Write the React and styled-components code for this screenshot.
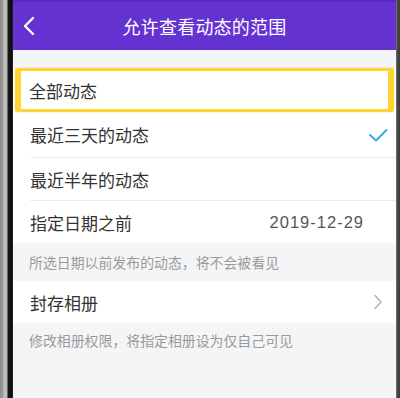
import React from "react";
import styled, { createGlobalStyle } from "styled-components";

const GlobalStyle = createGlobalStyle`
  html, body {
    margin: 0;
    padding: 0;
    background: #f4f5f7;
  }
  body {
    font-family: "Noto Sans CJK SC", "Noto Sans", sans-serif;
  }
`;

const Frame = styled.div`
  display: flex;
  width: 400px;
  height: 398px;
  overflow: hidden;
`;

const LeftBezel = styled.div`
  width: 13px;
  flex-shrink: 0;
  background: linear-gradient(
    to right,
    #8e8e8e 0px,
    #9c9c9c 3px,
    #c4c4c4 4px,
    #b8b8b8 7px,
    #1a1a1a 8px,
    #0a0a0a 12px,
    #3a3a3a 13px
  );
`;

const RightBezel = styled.div`
  width: 4px;
  flex-shrink: 0;
  background: linear-gradient(to right, #8a8a8a 0px, #4a4a4a 1px, #3c3c3c 4px);
`;

const Screen = styled.div`
  flex: 1;
  display: flex;
  flex-direction: column;
  background: #f4f5f7;
`;

const Header = styled.div`
  height: 50px;
  flex-shrink: 0;
  display: flex;
  align-items: center;
  justify-content: center;
  position: relative;
  background: #6532d2;
  border-top: 2px solid #5a2cbc;
  box-sizing: border-box;
`;

const Back = styled.div`
  position: absolute;
  left: 9px;
  top: 50%;
  transform: translateY(-50%);
  display: flex;
`;

const Title = styled.div`
  color: #ffffff;
  font-size: 18px;
  letter-spacing: 0.2px;
`;

const Spacer = styled.div`
  height: 18px;
`;

const Group = styled.div`
  background: #ffffff;
`;

const Highlight = styled.div`
  margin: 0 2px 0 2px;
  border: 3px solid #fcd434;
  border-left-width: 6px;
  border-right-width: 6px;
  border-radius: 2px;
  box-shadow: 0 0 2px rgba(252, 212, 52, 0.6);
`;

const Row = styled.div`
  height: ${(p) => p.$h ?? 44}px;
  display: flex;
  align-items: center;
  justify-content: space-between;
  padding-left: ${(p) => p.$pl ?? 17}px;
  padding-right: ${(p) => p.$pr ?? 10}px;
  box-sizing: border-box;
  border-bottom: ${(p) => (p.$line ? "1px solid #ebebeb" : "none")};
  margin-left: ${(p) => p.$ml ?? 0}px;
`;

const Label = styled.span`
  color: #333333;
  font-size: 17px;
`;

const Value = styled.span`
  color: #555555;
  font-size: 16.5px;
  letter-spacing: 1px;
  font-family: "Liberation Sans", "Noto Sans", sans-serif;
  margin-right: 22px;
`;

const Note = styled.div`
  color: #9a9a9a;
  font-size: 13.9px;
  padding: 0 0 0 16px;
  height: ${(p) => p.$h}px;
  display: flex;
  align-items: center;
`;

const Check = () => (
  <svg width="20" height="14" viewBox="0 0 20 14">
    <path d="M2 7 L8 12.5 L18.5 2" fill="none" stroke="#3ba9e3" strokeWidth="2" strokeLinecap="round" strokeLinejoin="round" />
  </svg>
);

const Chevron = () => (
  <svg width="10" height="16" viewBox="0 0 10 16">
    <path d="M2 1.5 L8 8 L2 14.5" fill="none" stroke="#b7b7b7" strokeWidth="1.6" strokeLinecap="round" strokeLinejoin="round" />
  </svg>
);

const BackIcon = () => (
  <svg width="14" height="20" viewBox="0 0 14 20">
    <path d="M11 2 L3 10 L11 18" fill="none" stroke="#ffffff" strokeWidth="2.4" strokeLinecap="round" strokeLinejoin="round" />
  </svg>
);

const App = () => {
  return (
    <>
      <GlobalStyle />
      <Frame>
        <LeftBezel />
        <Screen>
          <Header>
            <Back>
              <BackIcon />
            </Back>
            <Title>允许查看动态的范围</Title>
          </Header>
          <Spacer />
          <Group>
            <Highlight>
              <Row $h={38} $pl={8}>
                <Label>全部动态</Label>
              </Row>
            </Highlight>
            <Row $h={46} $line $ml={17} $pl={0} $pr={8}>
              <Label>最近三天的动态</Label>
              <Check />
            </Row>
            <Row $h={43} $line $ml={17} $pl={0}>
              <Label>最近半年的动态</Label>
            </Row>
            <Row $h={42} $pl={17}>
              <Label>指定日期之前</Label>
              <Value>2019-12-29</Value>
            </Row>
          </Group>
          <Note $h={38}>所选日期以前发布的动态，将不会被看见</Note>
          <Group>
            <Row $h={42} $pr={13}>
              <Label>封存相册</Label>
              <Chevron />
            </Row>
          </Group>
          <Note $h={34}>修改相册权限，将指定相册设为仅自己可见</Note>
        </Screen>
        <RightBezel />
      </Frame>
    </>
  );
};

export default App;
